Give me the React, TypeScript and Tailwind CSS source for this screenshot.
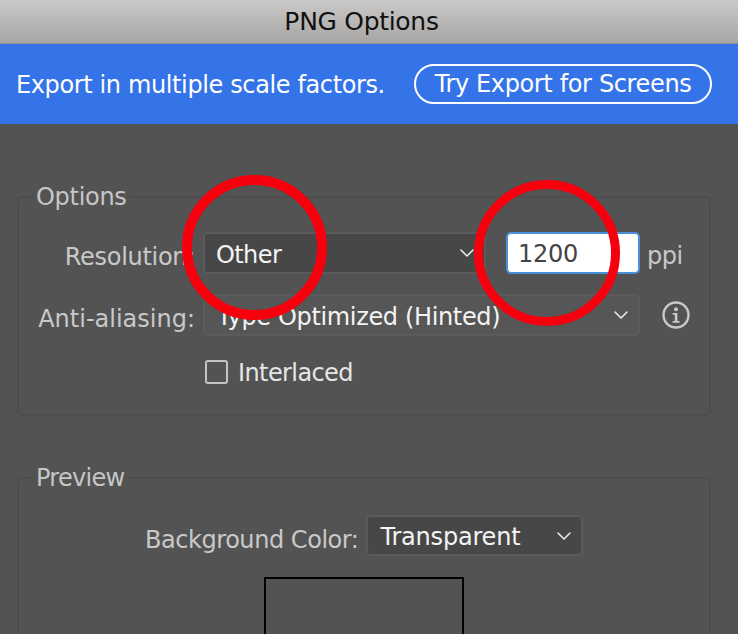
import { ChevronDown } from 'lucide-react';

function Select({ label, className, textClass }: { label: string; className: string; textClass: string }) {
  return (
    <div className={`flex items-center justify-between rounded-[5px] border-2 pr-[5px] ${className}`}>
      <span className={`pt-[3px] text-[24px] leading-none text-[#f4f4f4] ${textClass}`}>{label}</span>
      <ChevronDown className="h-[24px] w-[24px] text-[#eeeeee]" strokeWidth={1.5} />
    </div>
  );
}

function Ring({ className }: { className: string }) {
  return <div className={`pointer-events-none absolute rounded-full border-[#f5000c] blur-[0.5px] ${className}`} />;
}

export default function App() {
  return (
    <div className="relative h-[634px] w-[738px] overflow-hidden bg-[#535353] [font-family:'DejaVu_Sans',sans-serif]">
      {/* Title bar */}
      <header className="flex h-[44px] items-center justify-center border-b border-[#8f8d8d] bg-gradient-to-b from-[#cbc8c8] to-[#a8a5a5] pr-[15px]">
        <h1 className="text-[25px] font-normal leading-none tracking-[-0.3px] text-[#111111]">PNG Options</h1>
      </header>

      {/* Promo banner */}
      <div className="flex h-[80px] items-center justify-between bg-[#3573e8] pl-4 pr-[26px]">
        <span className="pt-[2px] text-[24px] leading-none tracking-[-0.375px] text-white">Export in multiple scale factors.</span>
        <button className="flex h-[40px] w-[298px] items-center justify-center rounded-full border-2 border-white text-[24px] leading-none tracking-[-0.36px] text-white">
          Try Export for Screens
        </button>
      </div>

      {/* Options */}
      <fieldset className="ml-[17px] mr-[27px] mt-[58px] h-[234px] rounded-[5px] border-2 border-[#4d4d4d] pt-[20px]">
        <legend className="ml-[15px] px-[2px] text-[24px] leading-[30px] tracking-[-0.3px] text-[#c6c6c6]">Options</legend>
        <div className="grid grid-cols-[176px_1fr] items-center gap-x-2 gap-y-5">
          <span className="pt-2 text-right text-[24px] leading-none tracking-[-0.3px] text-[#c9c9c9]">Resolution:</span>
          <div className="flex items-center">
            <Select label="Other" textClass="tracking-[-0.6px] pl-[11px]" className="h-[42px] w-[283px] border-[#5b5b5b] bg-[#474747]" />
            <div className="ml-[20px] flex h-[42px] w-[134px] items-center rounded-[5px] border-2 border-[#4a90d9] bg-white pl-[10px] pt-[2px] text-[24px] leading-none tracking-[-0.25px] text-[#444444]">
              1200
            </div>
            <span className="ml-[7px] pt-[6px] text-[24px] leading-none tracking-[-0.5px] text-[#c9c9c9]">ppi</span>
          </div>
          <span className="pt-2 text-right text-[24px] leading-none text-[#c9c9c9]">Anti-aliasing:</span>
          <div className="flex items-center">
            <Select label="Type Optimized (Hinted)" textClass="tracking-[-0.35px] pl-3" className="h-[42px] w-[437px] border-[#5b5b5b] bg-[#565656]" />
            <svg className="ml-[21px] h-[30px] w-[30px]" viewBox="0 0 30 30" fill="none">
              <circle cx="15" cy="15" r="12.5" stroke="#c9c9c9" strokeWidth="2.4" />
              <circle cx="15" cy="9.2" r="2" fill="#c9c9c9" />
              <path d="M11.6 13h4.8v8h2.2v1.8h-7v-1.8h2.2v-6.2h-2.2z" fill="#c9c9c9" />
            </svg>
          </div>
          <div />
          <label className="mt-[2px] flex items-center pl-[2px]">
            <span className="h-[24px] w-[23px] rounded-[3px] border-2 border-[#c4c4c4]" />
            <span className="ml-[10px] pt-[3px] text-[24px] leading-none tracking-[-0.6px] text-[#e6e6e6]">Interlaced</span>
          </label>
        </div>
      </fieldset>

      {/* Preview */}
      <fieldset className="ml-[17px] mr-[27px] mt-[47px] h-[300px] rounded-[5px] border-2 border-[#4d4d4d] pt-[22px]">
        <legend className="ml-[15px] px-[2px] text-[24px] leading-[30px] tracking-[-0.7px] text-[#c6c6c6]">Preview</legend>
        <div className="flex items-center pl-[126px]">
          <span className="pt-2 text-[24px] leading-none tracking-[-0.45px] text-[#c9c9c9]">Background Color:</span>
          <Select label="Transparent" textClass="tracking-[-0.2px] pl-3" className="ml-[8px] h-[41px] w-[217px] border-[#5b5b5b] bg-[#474747]" />
        </div>
        <div className="ml-[245px] mt-[21px] h-[100px] w-[200px] border-2 border-black" />
      </fieldset>

      {/* Annotations drawn over the dialog */}
      <Ring className="left-[182px] top-[175px] h-[145px] w-[145px] border-[10px]" />
      <Ring className="left-[474px] top-[180px] h-[146px] w-[146px] border-[9px]" />
    </div>
  );
}
